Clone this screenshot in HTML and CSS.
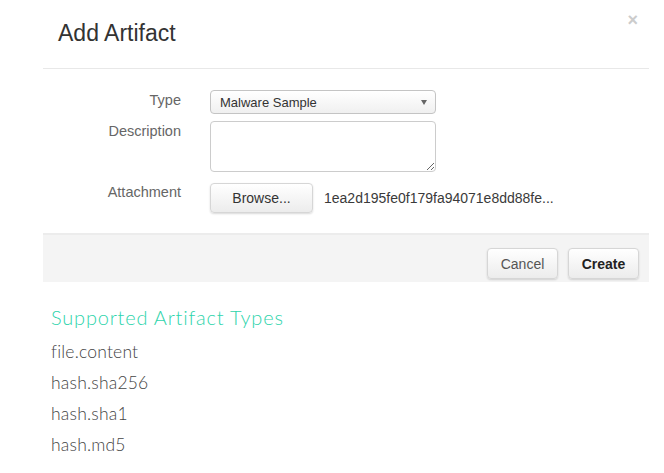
FILE: index.html
```html
<!DOCTYPE html>
<html lang="en">
<head>
    <meta charset="UTF-8">
    <title>Add Artifact</title>
    <link rel="stylesheet" href="styles.css">
</head>
<body>

<div class="modal">
    <div class="modal-header">
        <h3>Add Artifact</h3>
        <span class="close">&times;</span>
    </div>

    <form class="modal-body">
        <div class="row">
            <label for="type">Type</label>
            <div class="select">
                <span>Malware Sample</span>
                <span class="caret"></span>
            </div>
        </div>
        <div class="row">
            <label for="desc">Description</label>
            <textarea id="desc"></textarea>
        </div>
        <div class="row row-file">
            <label>Attachment</label>
            <button type="button" class="btn browse">Browse...</button>
            <span class="filename">1ea2d195fe0f179fa94071e8dd88fe...</span>
        </div>
    </form>

    <div class="modal-footer">
        <button type="button" class="btn">Cancel</button>
        <button type="button" class="btn btn-primary">Create</button>
    </div>
</div>

<div class="types">
    <h4>Supported Artifact Types</h4>
    <ul>
        <li>file.content</li>
        <li>hash.sha256</li>
        <li>hash.sha1</li>
        <li>hash.md5</li>
    </ul>
</div>

</body>
</html>
```

FILE: styles.css
```css
body {
    margin: 0;
    font-family: "Liberation Sans", Arial, sans-serif;
    background-color: #fff;
    color: #333;
}
.modal {
    margin-left: 43px;
    width: 606px;
}
.modal-header {
    display: flex;
    justify-content: space-between;
    height: 68px;
    border-bottom: 1px solid #e8e8e8;
}
.modal-header h3 {
    margin: 20px 0 0 15px;
    font-size: 23px;
    font-weight: normal;
    color: #333;
}
.close {
    margin: 10px 11px 0 0;
    font-size: 18px;
    font-weight: bold;
    color: #ccc;
}
.modal-body {
    padding: 21px 0 20px;
}
.row {
    display: flex;
    align-items: flex-start;
    margin-bottom: 7px;
    font-size: 13px;
}
label {
    width: 138px;
    text-align: right;
    padding-right: 29px;
    color: #666;
    font-size: 14.5px;
    padding-top: 2px;
}
.select {
    height: 22px;
    border: 1px solid #c4c4c4;
    border-radius: 4px;
    background: linear-gradient(#fff, #f0f0f0);
    display: flex;
    align-items: center;
    justify-content: space-between;
    padding: 0 8px 0 9px;
    box-sizing: content-box;
    width: 207px;
    color: #333;
}
.caret {
    width: 0;
    height: 0;
    border-left: 3px solid transparent;
    border-right: 3px solid transparent;
    border-top: 5px solid #666;
}
textarea {
    width: 224px;
    height: 49px;
    margin: 0;
    padding: 0;
    border: 1px solid #ccc;
    border-radius: 4px;
    box-sizing: content-box;
}
.row-file {
    margin-top: 11px;
    margin-bottom: 0;
}
.row-file label {
    padding-top: 1px;
}
.btn {
    font-family: "Liberation Sans", Arial, sans-serif;
    font-size: 14px;
    color: #333;
    background: linear-gradient(#fff, #ececec);
    border: 1px solid #d6d6d6;
    border-radius: 4px;
    box-shadow: 0 1px 2px rgba(0, 0, 0, 0.15);
    cursor: pointer;
}
.browse {
    width: 103px;
    height: 30px;
    padding: 0;
}
.filename {
    margin-left: 11px;
    margin-top: 7px;
    font-size: 14px;
    color: #3a3a3a;
}
.modal-footer {
    background-color: #f4f4f4;
    border-top: 2px solid #ececec;
    display: flex;
    justify-content: flex-end;
    align-items: flex-start;
    gap: 10px;
    padding: 13px 10px 0 0;
    box-sizing: border-box;
    height: 49px;
}
.modal-footer .btn {
    height: 31px;
    width: 71px;
    padding: 0;
    color: #555;
}
.modal-footer .btn-primary {
    color: #222;
    font-weight: bold;
}
.types {
    margin: 23px 0 0 51px;
}
.types h4 {
    margin: 0 0 7px;
    font-family: Lato, sans-serif;
    font-weight: 300;
    font-size: 20px;
    letter-spacing: 0.8px;
    color: #2fd4ac;
}
.types ul {
    list-style: none;
    margin: 0;
    padding: 0;
}
.types li {
    font-family: Lato, sans-serif;
    font-weight: 300;
    font-size: 17.5px;
    letter-spacing: 0.2px;
    color: #444;
    line-height: 31px;
}
```
